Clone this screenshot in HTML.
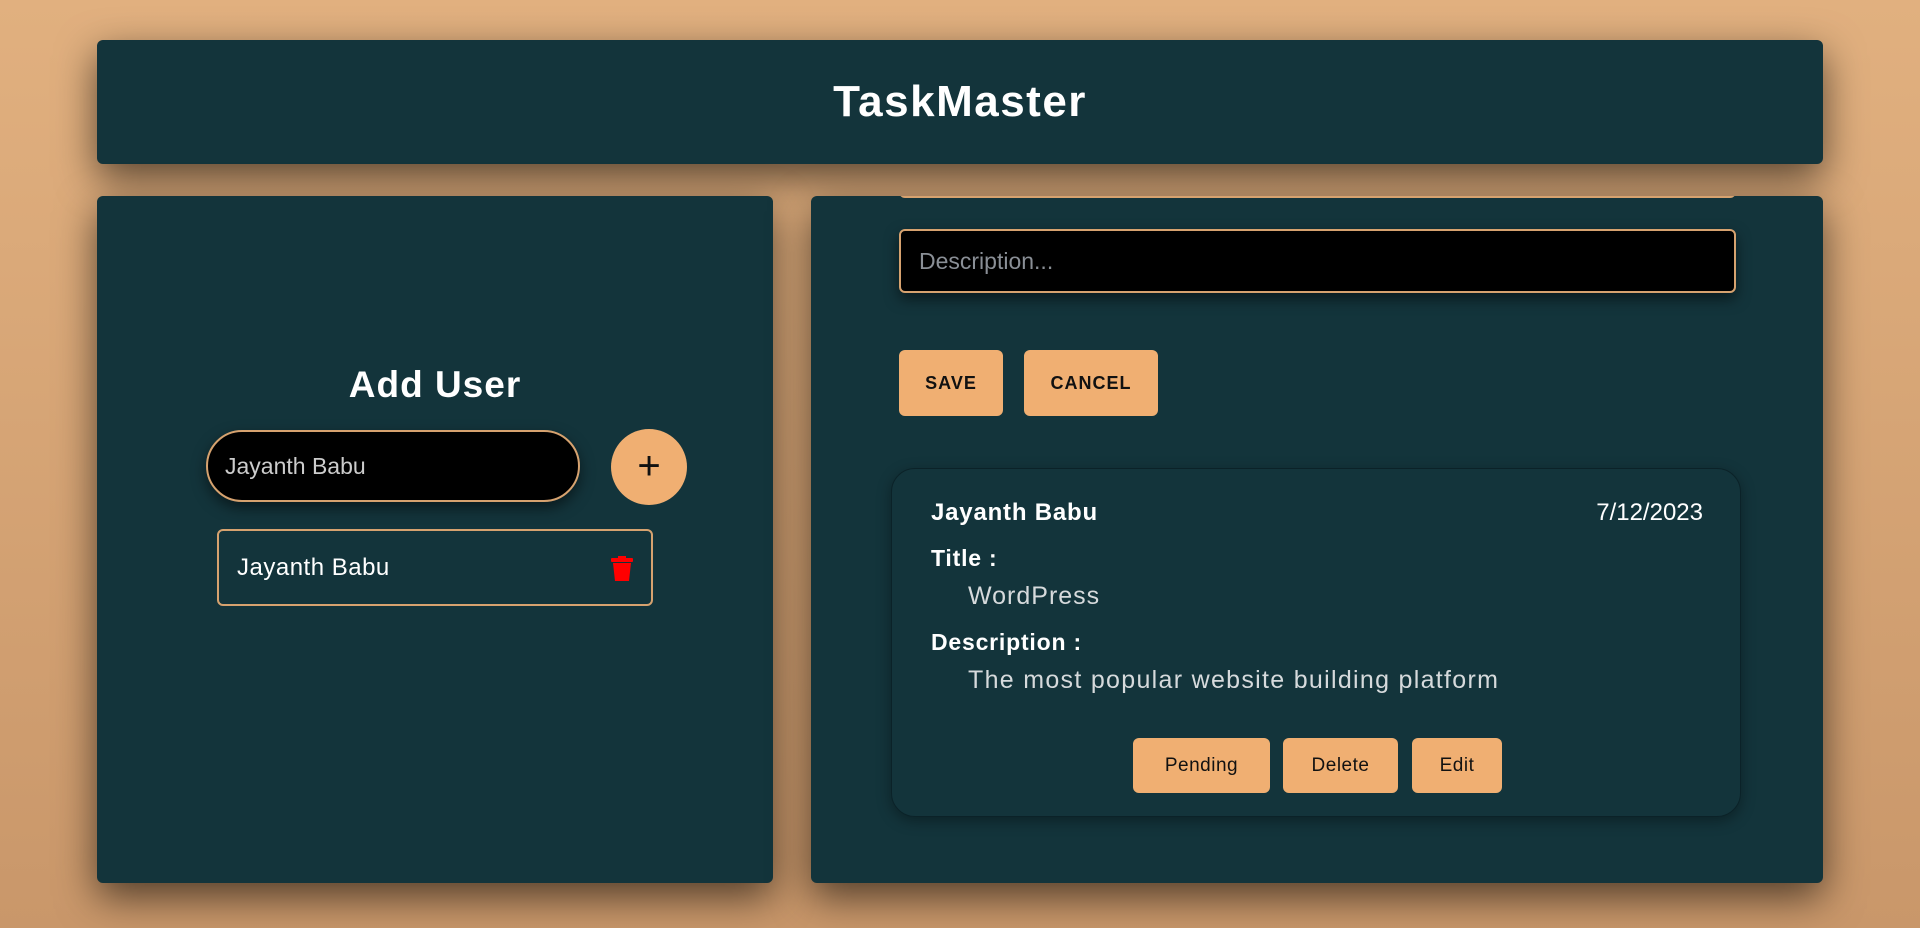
<!DOCTYPE html>
<html><head><style>
*{box-sizing:border-box;margin:0;padding:0}
body{width:1920px;height:928px;overflow:hidden;background:linear-gradient(180deg,#e1b07f 0%,#c9976a 100%);font-family:"Liberation Sans",sans-serif;position:relative}
.panel{position:absolute;background:#13343b;border-radius:6px;box-shadow:0 14px 40px rgba(0,0,0,.6)}
.abs{position:absolute}
.btn{position:absolute;background:#f0af72;border-radius:6px;color:#111;display:flex;align-items:center;justify-content:center}
</style></head><body>
<div class="panel" style="left:97px;top:40px;width:1726px;height:124px;display:flex;align-items:center;justify-content:center;color:#fff;font-weight:bold;font-size:44px;letter-spacing:1.5px">TaskMaster</div>

<div class="panel" style="left:97px;top:196px;width:676px;height:687px">
  <div class="abs" style="left:0;width:676px;top:168px;text-align:center;color:#fff;font-weight:bold;font-size:37px;letter-spacing:1px">Add User</div>
  <div class="abs" style="left:109px;top:234px;width:374px;height:72px;background:#000;border:2px solid #d6a26f;border-radius:36px;box-shadow:0 6px 14px rgba(0,0,0,.5);color:#ccc;font-size:23px;padding-left:17px;line-height:68px">Jayanth Babu</div>
  <div class="abs" style="left:514px;top:233px;width:76px;height:76px;border-radius:50%;background:#f0af72;color:#111;font-size:40px;text-align:center;line-height:74px">+</div>
  <div class="abs" style="left:120px;top:333px;width:436px;height:77px;border:2px solid #d6a26f;border-radius:6px;color:#fff;font-size:24px;padding-left:18px;line-height:73px;letter-spacing:0.5px">Jayanth Babu
    <svg style="position:absolute;left:392px;top:25px" width="22" height="26" viewBox="0 0 22 26"><rect x="0" y="2" width="22" height="4" rx="1" fill="#f00"/><rect x="7" y="0" width="8" height="3" fill="#f00"/><path d="M2 7h18l-2 18H4z" fill="#f00"/></svg>
  </div>
</div>

<div class="panel" style="left:811px;top:196px;width:1012px;height:687px;overflow:hidden">
  <div class="abs" style="left:88px;top:-28px;width:837px;height:30px;background:#000;border:2px solid #d6a26f;border-radius:6px"></div>
  <div class="abs" style="left:88px;top:33px;width:837px;height:64px;background:#000;border:2px solid #d6a26f;border-radius:6px;box-shadow:0 6px 14px rgba(0,0,0,.5);color:#8a8f96;font-size:23px;padding-left:18px;line-height:60px">Description...</div>
  <div class="btn" style="left:88px;top:154px;width:104px;height:66px;font-weight:bold;font-size:18px;letter-spacing:1px">SAVE</div>
  <div class="btn" style="left:213px;top:154px;width:134px;height:66px;font-weight:bold;font-size:18px;letter-spacing:1px">CANCEL</div>
  <div class="abs" style="left:80px;top:272px;width:850px;height:349px;border:1px solid #0b2228;border-radius:24px;box-shadow:0 4px 14px rgba(0,0,0,.35)">
    <div class="abs" style="left:39px;top:30px;color:#fff;font-weight:bold;font-size:24px;letter-spacing:0.8px">Jayanth Babu</div>
    <div class="abs" style="right:37px;top:30px;color:#fff;font-size:24px">7/12/2023</div>
    <div class="abs" style="left:39px;top:76px;color:#fff;font-weight:bold;font-size:23px;letter-spacing:0.8px">Title :</div>
    <div class="abs" style="left:76px;top:113px;color:#d6dadc;font-size:25px;letter-spacing:1px">WordPress</div>
    <div class="abs" style="left:39px;top:160px;color:#fff;font-weight:bold;font-size:23px;letter-spacing:0.8px">Description :</div>
    <div class="abs" style="left:76px;top:197px;color:#d6dadc;font-size:25px;letter-spacing:1.3px">The most popular website building platform</div>
    <div class="btn" style="left:241px;top:269px;width:137px;height:55px;font-size:19px;letter-spacing:0.5px">Pending</div>
    <div class="btn" style="left:391px;top:269px;width:115px;height:55px;font-size:19px;letter-spacing:0.5px">Delete</div>
    <div class="btn" style="left:520px;top:269px;width:90px;height:55px;font-size:19px;letter-spacing:0.5px">Edit</div>
  </div>
</div>
</body></html>
